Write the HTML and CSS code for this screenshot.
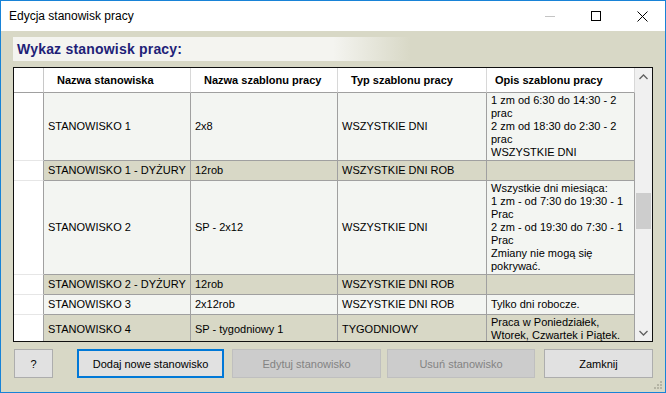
FILE: index.html
```html
<!DOCTYPE html>
<html lang="pl">

<head>
    <meta charset="UTF-8">
    <title>Edycja stanowisk pracy</title>
    <link rel="stylesheet" href="styles.css">
</head>

<body>
    <div class="window">
        <div class="titlebar">
            <span class="title">Edycja stanowisk pracy</span>
            <div class="controls">
                <span class="ctl">
                    <svg width="10" height="10" viewBox="0 0 10 10"><path d="M0 5.5h10" stroke="#c4c4c4" stroke-width="1"/></svg>
                </span>
                <span class="ctl">
                    <svg width="10" height="10" viewBox="0 0 10 10"><rect x="0.5" y="0.5" width="9" height="9" fill="none" stroke="#000" stroke-width="1"/></svg>
                </span>
                <span class="ctl">
                    <svg width="11" height="11" viewBox="0 0 11 11"><path d="M0.5 0.5l10 10M10.5 0.5l-10 10" stroke="#000" stroke-width="1"/></svg>
                </span>
            </div>
        </div>

        <div class="content">
            <div class="caption">Wykaz stanowisk pracy:</div>

            <div class="grid">
                <div class="grid-view">
                    <table>
                        <colgroup>
                            <col class="c-rh">
                            <col class="c-1">
                            <col class="c-2">
                            <col class="c-3">
                            <col class="c-4">
                        </colgroup>
                        <thead>
                            <tr>
                                <th class="rh"></th>
                                <th>Nazwa stanowiska</th>
                                <th>Nazwa szablonu pracy</th>
                                <th>Typ szablonu pracy</th>
                                <th class="last">Opis szablonu pracy</th>
                            </tr>
                        </thead>
                        <tbody>
                            <tr class="light">
                                <td class="rh"></td>
                                <td>STANOWISKO 1</td>
                                <td>2x8</td>
                                <td>WSZYSTKIE DNI</td>
                                <td>1 zm od 6:30 do 14:30 - 2 prac<br>2 zm od 18:30 do 2:30 - 2 prac<br>WSZYSTKIE DNI</td>
                            </tr>
                            <tr class="dark">
                                <td class="rh"></td>
                                <td>STANOWISKO 1 - DYŻURY</td>
                                <td>12rob</td>
                                <td>WSZYSTKIE DNI ROB</td>
                                <td></td>
                            </tr>
                            <tr class="light">
                                <td class="rh"></td>
                                <td>STANOWISKO 2</td>
                                <td>SP - 2x12</td>
                                <td>WSZYSTKIE DNI</td>
                                <td>Wszystkie dni miesiąca:<br>1 zm - od 7:30 do 19:30 - 1 Prac<br>2 zm - od 19:30 do 7:30 - 1 Prac<br>Zmiany nie mogą się pokrywać.</td>
                            </tr>
                            <tr class="dark">
                                <td class="rh"></td>
                                <td>STANOWISKO 2 - DYŻURY</td>
                                <td>12rob</td>
                                <td>WSZYSTKIE DNI ROB</td>
                                <td></td>
                            </tr>
                            <tr class="light">
                                <td class="rh"></td>
                                <td>STANOWISKO 3</td>
                                <td>2x12rob</td>
                                <td>WSZYSTKIE DNI ROB</td>
                                <td>Tylko dni robocze.</td>
                            </tr>
                            <tr class="dark">
                                <td class="rh"></td>
                                <td>STANOWISKO 4</td>
                                <td>SP - tygodniowy 1</td>
                                <td>TYGODNIOWY</td>
                                <td>Praca w Poniedziałek, Wtorek, Czwartek i Piątek.</td>
                            </tr>
                        </tbody>
                    </table>
                </div>
                <div class="scrollbar">
                    <span class="arrow">
                        <svg width="9" height="6" viewBox="0 0 9 6"><path d="M0.5 5l4-4 4 4" fill="none" stroke="#606060" stroke-width="1.3"/></svg>
                    </span>
                    <div class="track">
                        <div class="thumb"></div>
                    </div>
                    <span class="arrow">
                        <svg width="9" height="6" viewBox="0 0 9 6"><path d="M0.5 1l4 4 4-4" fill="none" stroke="#606060" stroke-width="1.3"/></svg>
                    </span>
                </div>
            </div>

            <div class="buttons">
                <button class="btn help">?</button>
                <button class="btn add default">Dodaj nowe stanowisko</button>
                <button class="btn edit" disabled>Edytuj stanowisko</button>
                <button class="btn remove" disabled>Usuń stanowisko</button>
                <button class="btn close">Zamknij</button>
            </div>
        </div>

        <span class="grip">
            <svg width="9" height="9" viewBox="0 0 9 9" fill="#b4b4a4">
                <rect x="6" y="0" width="2" height="2"/>
                <rect x="3" y="3" width="2" height="2"/>
                <rect x="6" y="3" width="2" height="2"/>
                <rect x="0" y="6" width="2" height="2"/>
                <rect x="3" y="6" width="2" height="2"/>
                <rect x="6" y="6" width="2" height="2"/>
            </svg>
        </span>
    </div>
</body>

</html>
```

FILE: styles.css
```css
* {
    margin: 0;
    padding: 0;
    box-sizing: border-box;
}

body {
    font-family: "Liberation Sans", Arial, sans-serif;
    font-size: 11px;
    color: #000;
    background: #fff;
}

.window {
    position: relative;
    width: 666px;
    height: 393px;
    border: 1px solid #1883d7;
    display: flex;
    flex-direction: column;
    background: #d8d8c6;
}

.titlebar {
    height: 30px;
    background: #fff;
    display: flex;
    align-items: center;
    justify-content: space-between;
}

.title {
    padding-left: 8px;
    font-size: 12px;
    color: #000;
}

.controls {
    display: flex;
    height: 100%;
}

.ctl {
    width: 46px;
    height: 100%;
    display: flex;
    align-items: center;
    justify-content: center;
}

.ctl svg {
    display: block;
}

.content {
    flex: 1;
    padding: 6px 12px 0;
    display: flex;
    flex-direction: column;
}

.caption {
    height: 24px;
    padding-left: 4px;
    display: flex;
    align-items: center;
    font-size: 14px;
    font-weight: bold;
    letter-spacing: 0.2px;
    color: #1f1f78;
    background: linear-gradient(to right, #f4f4f0 0, #f4f4f0 320px, #d8d8c6 398px);
    margin-bottom: 6px;
}

/* tabela */
.grid {
    height: 275px;
    border: 1px solid #101010;
    display: flex;
    background: #fff;
}

.grid-view {
    width: 621px;
    overflow: hidden;
}

table {
    width: 621px;
    table-layout: fixed;
    border-collapse: separate;
    border-spacing: 0;
}

.c-rh { width: 30px; }
.c-1 { width: 147px; }
.c-2 { width: 147px; }
.c-3 { width: 149px; }
.c-4 { width: 148px; }

th {
    height: 25px;
    background: #fff;
    font-weight: bold;
    text-align: left;
    padding-left: 13px;
    border-right: 1px solid #d8d8d8;
    border-bottom: 1px solid #a0a0a0;
}

th.last {
    padding-left: 8px;
}

th.rh {
    padding: 0;
    border-right: 1px solid #c8c8c8;
}

td {
    height: 20px;
    padding: 1px 4px 1px;
    line-height: 13px;
    vertical-align: middle;
    border-right: 1px solid #a0a0a0;
    border-bottom: 1px solid #a0a0a0;
}

td.rh {
    padding: 0;
    background: #fff;
    border-bottom: 1px solid #e6e6e6;
    border-right: 1px solid #a0a0a0;
}

.light td {
    background: #f3f5f2;
}

.dark td {
    background: #d8d8c6;
}

.light td.rh,
.dark td.rh {
    background: #fff;
}

/* pasek przewijania */
.scrollbar {
    width: 17px;
    background: #f0f0f0;
    display: flex;
    flex-direction: column;
}

.arrow {
    height: 17px;
    display: flex;
    align-items: center;
    justify-content: center;
}

.arrow svg {
    display: block;
}

.track {
    flex: 1;
    padding: 108px 1px 0;
}

.thumb {
    height: 36px;
    background: #cdcdcd;
}

/* przyciski */
.buttons {
    display: flex;
    margin-top: 7px;
}

.btn {
    height: 29px;
    font-family: "Liberation Sans", Arial, sans-serif;
    font-size: 11px;
    color: #000;
    background: #e1e1e1;
    border: 1px solid #adadad;
}

.btn:disabled {
    background: #cccccc;
    border-color: #bfbfbf;
    color: #838383;
}

.btn.default {
    border: 2px solid #0078d7;
}

.help {
    width: 39px;
    margin-left: 1px;
}

.add {
    width: 147px;
    margin-left: 24px;
}

.edit {
    width: 149px;
    margin-left: 8px;
}

.remove {
    width: 148px;
    margin-left: 6px;
}

.close {
    width: 109px;
    margin-left: 9px;
}

.grip {
    position: absolute;
    right: 2px;
    bottom: 2px;
    line-height: 0;
}
```
